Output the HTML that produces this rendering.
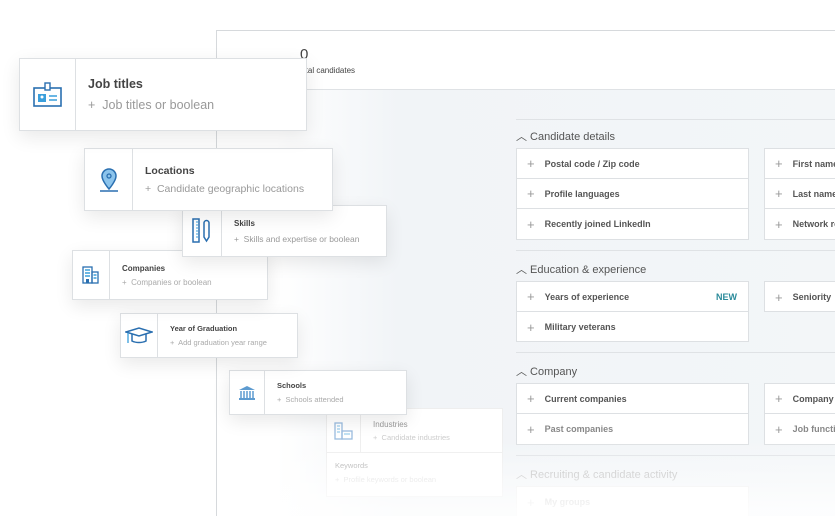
<!DOCTYPE html>
<html><head><meta charset="utf-8"><style>
*{margin:0;padding:0;box-sizing:border-box}
html,body{width:835px;height:516px;overflow:hidden}
body{background:#fff;font-family:"Liberation Sans",sans-serif;position:relative;color:#333}
.panel{position:absolute;left:216px;top:30px;width:640px;height:486px;border:1px solid #d6d9dc;border-bottom:none;background:linear-gradient(90deg,#fff 0,#fff 60px,#f1f4f7 180px,#f3f6f8 100%)}
.hdr{position:absolute;left:0;top:0;right:0;height:59px;background:#fff;border-bottom:1px solid #dfe2e5}
.abs{position:absolute}
.card{position:absolute;background:#fff;border:1px solid #dde0e3;box-shadow:0 6px 18px rgba(0,0,0,.09);display:flex}
.card .ic{border-right:1px solid #dde0e3;display:flex;align-items:center;justify-content:center;flex:none}
.card .tx{padding-left:12px;display:flex;flex-direction:column;justify-content:center}
.t{font-weight:bold;color:#444}
.s{color:#999}
.sec{position:absolute;left:516px;font-size:11px;color:#555}
.box{position:absolute;background:#fff;border:1px solid #dde0e3}
.row{height:30px;border-bottom:1px solid #dde0e3;display:flex;align-items:center;padding-left:10px;font-size:9px;font-weight:bold;color:#555;white-space:nowrap;overflow:hidden}
.row:last-child{border-bottom:none}
.row b{font-weight:normal;color:#999;font-size:13px;margin-right:10px}
.line{position:absolute;left:516px;right:0;height:1px;background:#dfe2e5}
.fade{position:absolute;left:217px;right:0;top:440px;height:76px;background:linear-gradient(rgba(255,255,255,0),rgba(255,255,255,.8) 90%)}
</style></head><body>
<div class="panel"><div class="hdr"></div></div>
<div class="abs" style="left:300px;top:46px;font-size:15px;color:#444">0</div>
<div class="abs" style="left:299px;top:66px;font-size:8px;color:#444">total candidates</div>

<div class="line" style="top:119px"></div>
<div class="sec" style="top:128px">︿ Candidate details</div>
<div class="box" style="left:516px;top:148px;width:233px;height:92px"><div class="row"><b>+</b>Postal code / Zip code</div><div class="row"><b>+</b>Profile languages</div><div class="row"><b>+</b>Recently joined LinkedIn</div></div>
<div class="box" style="left:764px;top:148px;width:90px;height:92px"><div class="row"><b>+</b>First names</div><div class="row"><b>+</b>Last names</div><div class="row"><b>+</b>Network re</div></div>
<div class="line" style="top:250px"></div>
<div class="sec" style="top:261px">︿ Education &amp; experience</div>
<div class="box" style="left:516px;top:281px;width:233px;height:61px"><div class="row"><b>+</b>Years of experience<span style="margin-left:auto;margin-right:11px;color:#2a8a9a">NEW</span></div><div class="row"><b>+</b>Military veterans</div></div>
<div class="box" style="left:764px;top:281px;width:90px;height:31px"><div class="row"><b>+</b>Seniority</div></div>
<div class="line" style="top:352px"></div>
<div class="sec" style="top:363px">︿ Company</div>
<div class="box" style="left:516px;top:383px;width:233px;height:62px"><div class="row"><b>+</b>Current companies</div><div class="row" style="color:#888"><b>+</b>Past companies</div></div>
<div class="box" style="left:764px;top:383px;width:90px;height:62px"><div class="row"><b>+</b>Company si</div><div class="row" style="color:#888"><b>+</b>Job functio</div></div>
<div class="line" style="top:455px"></div>
<div class="sec" style="top:466px;color:#bbb">︿ Recruiting &amp; candidate activity</div>
<div class="box" style="left:516px;top:486px;width:233px;height:40px;border-color:#eee"><div class="row" style="color:#ccc"><b style="color:#ddd">+</b>My groups</div></div>

<div class="card" style="left:326px;top:408px;width:177px;height:89px;flex-direction:column;box-shadow:none;border-color:#eee">
 <div style="display:flex;height:44px;border-bottom:1px solid #eee"><div class="ic" style="width:34px;border-color:#eee"><svg width="20" height="18" viewBox="0 0 20 18" opacity=".5"><rect x="1" y="1" width="7" height="16" fill="none" stroke="#3a7cc0" stroke-width="1.3"/><rect x="8" y="9" width="10" height="8" fill="none" stroke="#3a7cc0" stroke-width="1.3"/><path d="M3 4h3M3 7h3M3 10h3M10 12h6" stroke="#3a9fdc" stroke-width="1.3"/></svg></div><div class="tx"><div class="t" style="font-size:8px;color:#999;font-weight:normal">Industries</div><div class="s" style="font-size:7.5px;color:#ccc;margin-top:4px">+&nbsp; Candidate industries</div></div></div>
 <div style="padding:8px 0 0 8px"><div style="font-size:7.5px;color:#aaa">Keywords</div><div style="font-size:7.5px;color:#ddd;margin-top:5px">+&nbsp; Profile keywords or boolean</div></div>
</div>
<div class="fade"></div>

<div class="card" style="left:229px;top:370px;width:178px;height:45px"><div class="ic" style="width:35px"><svg width="18" height="16" viewBox="0 0 18 16"><path d="M1 5L9 1l8 4z" fill="#5d9bd0"/><path d="M3 6v7M6 6v7M9 6v7M12 6v7M15 6v7" stroke="#5d9bd0" stroke-width="1.5"/><rect x="1" y="13" width="16" height="2" fill="#5d9bd0"/></svg></div><div class="tx"><div class="t" style="font-size:7.5px">Schools</div><div class="s" style="font-size:7.5px;color:#aaa;margin-top:5px">+&nbsp; Schools attended</div></div></div>

<div class="card" style="left:120px;top:313px;width:178px;height:45px"><div class="ic" style="width:37px"><svg width="28" height="20" viewBox="0 0 28 20"><path d="M1 6l13-4 13 4-13 4z" fill="none" stroke="#2a6fb0" stroke-width="1.5"/><path d="M7 8v7c4 2 10 2 14 0V8" fill="none" stroke="#2a6fb0" stroke-width="1.5"/><path d="M3 7v10" stroke="#3a9fdc" stroke-width="1.3"/></svg></div><div class="tx"><div class="t" style="font-size:7.5px">Year of Graduation</div><div class="s" style="font-size:7.5px;color:#aaa;margin-top:5px">+&nbsp; Add graduation year range</div></div></div>

<div class="card" style="left:72px;top:250px;width:196px;height:50px"><div class="ic" style="width:37px"><svg width="18" height="18" viewBox="0 0 18 18"><rect x="1" y="1" width="9" height="16" fill="none" stroke="#2a6fb0" stroke-width="1.3"/><rect x="10" y="6" width="6" height="11" fill="none" stroke="#2a6fb0" stroke-width="1.3"/><path d="M3 4h5M3 7h5M3 10h5M11.5 9h3M11.5 12h3" stroke="#3a9fdc" stroke-width="1.5"/><rect x="4" y="13" width="3" height="4" fill="#2a6fb0"/></svg></div><div class="tx"><div class="t" style="font-size:8px">Companies</div><div class="s" style="font-size:8px;color:#aaa;margin-top:5px">+&nbsp; Companies or boolean</div></div></div>

<div class="card" style="left:182px;top:205px;width:205px;height:52px"><div class="ic" style="width:39px"><svg width="20" height="26" viewBox="0 0 20 26"><rect x="1" y="1" width="6" height="23" fill="none" stroke="#2a6fb0" stroke-width="1.5"/><path d="M4 4h2M4 7h2M4 10h2M4 13h2M4 16h2M4 19h2" stroke="#3a9fdc" stroke-width="1"/><path d="M12 5a2.5 2.5 0 015 0v14l-2.5 4-2.5-4z" fill="none" stroke="#2a6fb0" stroke-width="1.5"/></svg></div><div class="tx"><div class="t" style="font-size:8px">Skills</div><div class="s" style="font-size:8.5px;color:#999;margin-top:6px">+&nbsp; Skills and expertise or boolean</div></div></div>

<div class="card" style="left:84px;top:148px;width:249px;height:63px"><div class="ic" style="width:48px"><svg width="20" height="26" viewBox="0 0 20 26"><path d="M10 2a7 7 0 00-7 7c0 5 7 13 7 13s7-8 7-13a7 7 0 00-7-7z" fill="#8cc4ec" stroke="#2a6fb0" stroke-width="1.5"/><circle cx="10" cy="9" r="2" fill="none" stroke="#2a6fb0" stroke-width="1.3"/><path d="M1 24h18" stroke="#2a6fb0" stroke-width="1.5"/></svg></div><div class="tx"><div class="t" style="font-size:10.5px">Locations</div><div class="s" style="font-size:10.5px;color:#999;margin-top:6px">+&nbsp; Candidate geographic locations</div></div></div>

<div class="card" style="left:19px;top:58px;width:288px;height:73px"><div class="ic" style="width:56px"><svg width="30" height="26" viewBox="0 0 30 26"><rect x="1" y="6" width="27" height="18" fill="none" stroke="#2a6fb0" stroke-width="1.6"/><rect x="12" y="1" width="5" height="7" fill="#fff" stroke="#2a6fb0" stroke-width="1.4"/><rect x="5" y="12" width="8" height="8" fill="#3a9fdc"/><circle cx="9" cy="15" r="1.5" fill="#fff"/><path d="M16 14h8M16 18h8" stroke="#3a9fdc" stroke-width="1.6"/></svg></div><div class="tx"><div class="t" style="font-size:12.5px">Job titles</div><div class="s" style="font-size:12.5px;color:#999;margin-top:7px">+&nbsp; Job titles or boolean</div></div></div>
</body></html>
